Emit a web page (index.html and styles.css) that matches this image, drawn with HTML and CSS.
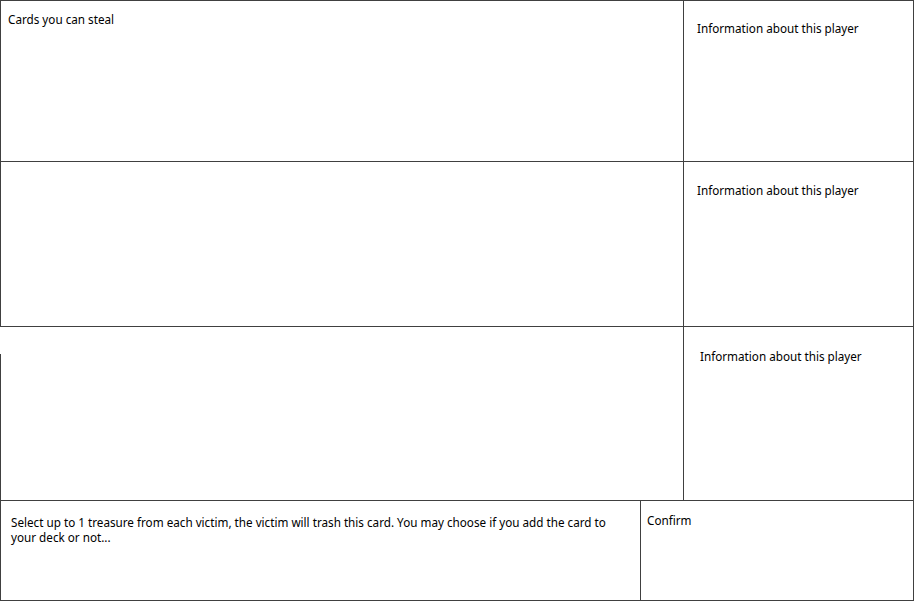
FILE: index.html
```html
<!DOCTYPE html>
<html lang="en">
<head>
<meta charset="utf-8">
<title>Steal cards</title>
<link rel="stylesheet" href="styles.css">
</head>
<body>
<div class="board">
  <div class="row row-1">
    <div class="cards cards-1"><span class="label">Cards you can steal</span></div>
    <div class="info info-1">Information about this player</div>
  </div>
  <div class="row row-2">
    <div class="cards"></div>
    <div class="info info-2">Information about this player</div>
  </div>
  <div class="row row-3">
    <div class="cards cards-3"></div>
    <div class="info info-3">Information about this player</div>
  </div>
  <div class="footer">
    <div class="message">Select up to 1 treasure from each victim, the victim will trash this card. You may choose if you add the card to your deck or not...</div>
    <div class="confirm">Confirm</div>
  </div>
</div>
</body>
</html>
```
FILE: styles.css
```css
* { box-sizing: border-box; }
html, body { margin: 0; padding: 0; background: #fff; }
body {
  font-family: "Noto Sans", "Open Sans", sans-serif;
  font-size: 11.7px;
  line-height: 16px;
  color: #000;
}
.board {
  width: 914px;
  height: 601px;
  border: 1px solid #404040;
  display: flex;
  flex-direction: column;
}
.row {
  display: flex;
  border-bottom: 1px solid #404040;
}
.row-1 { height: 161px; }
.row-2 { height: 165px; }
.row-3 { height: 174px; }
.cards {
  width: 683px;
  border-right: 1px solid #404040;
}
.info { flex: 1; }
.cards-1 { padding: 10px 0 0 7px; }
.info-1 { padding: 19px 0 0 13px; }
.info-2 { padding: 20px 0 0 13px; }
.info-3 { padding: 21px 0 0 16px; }
.row-3 .cards-3 {
  margin-left: -1px;
  width: 684px;
  background: linear-gradient(to bottom, #fff 27px, #404040 27px) no-repeat 0 0 / 1px 100%;
}
.footer {
  display: flex;
  flex: 1;
}
.message {
  width: 640px;
  border-right: 1px solid #404040;
  padding: 14px 12px 0 10px;
  line-height: 15px;
}
.confirm {
  flex: 1;
  padding: 11px 0 0 6px;
}
```
